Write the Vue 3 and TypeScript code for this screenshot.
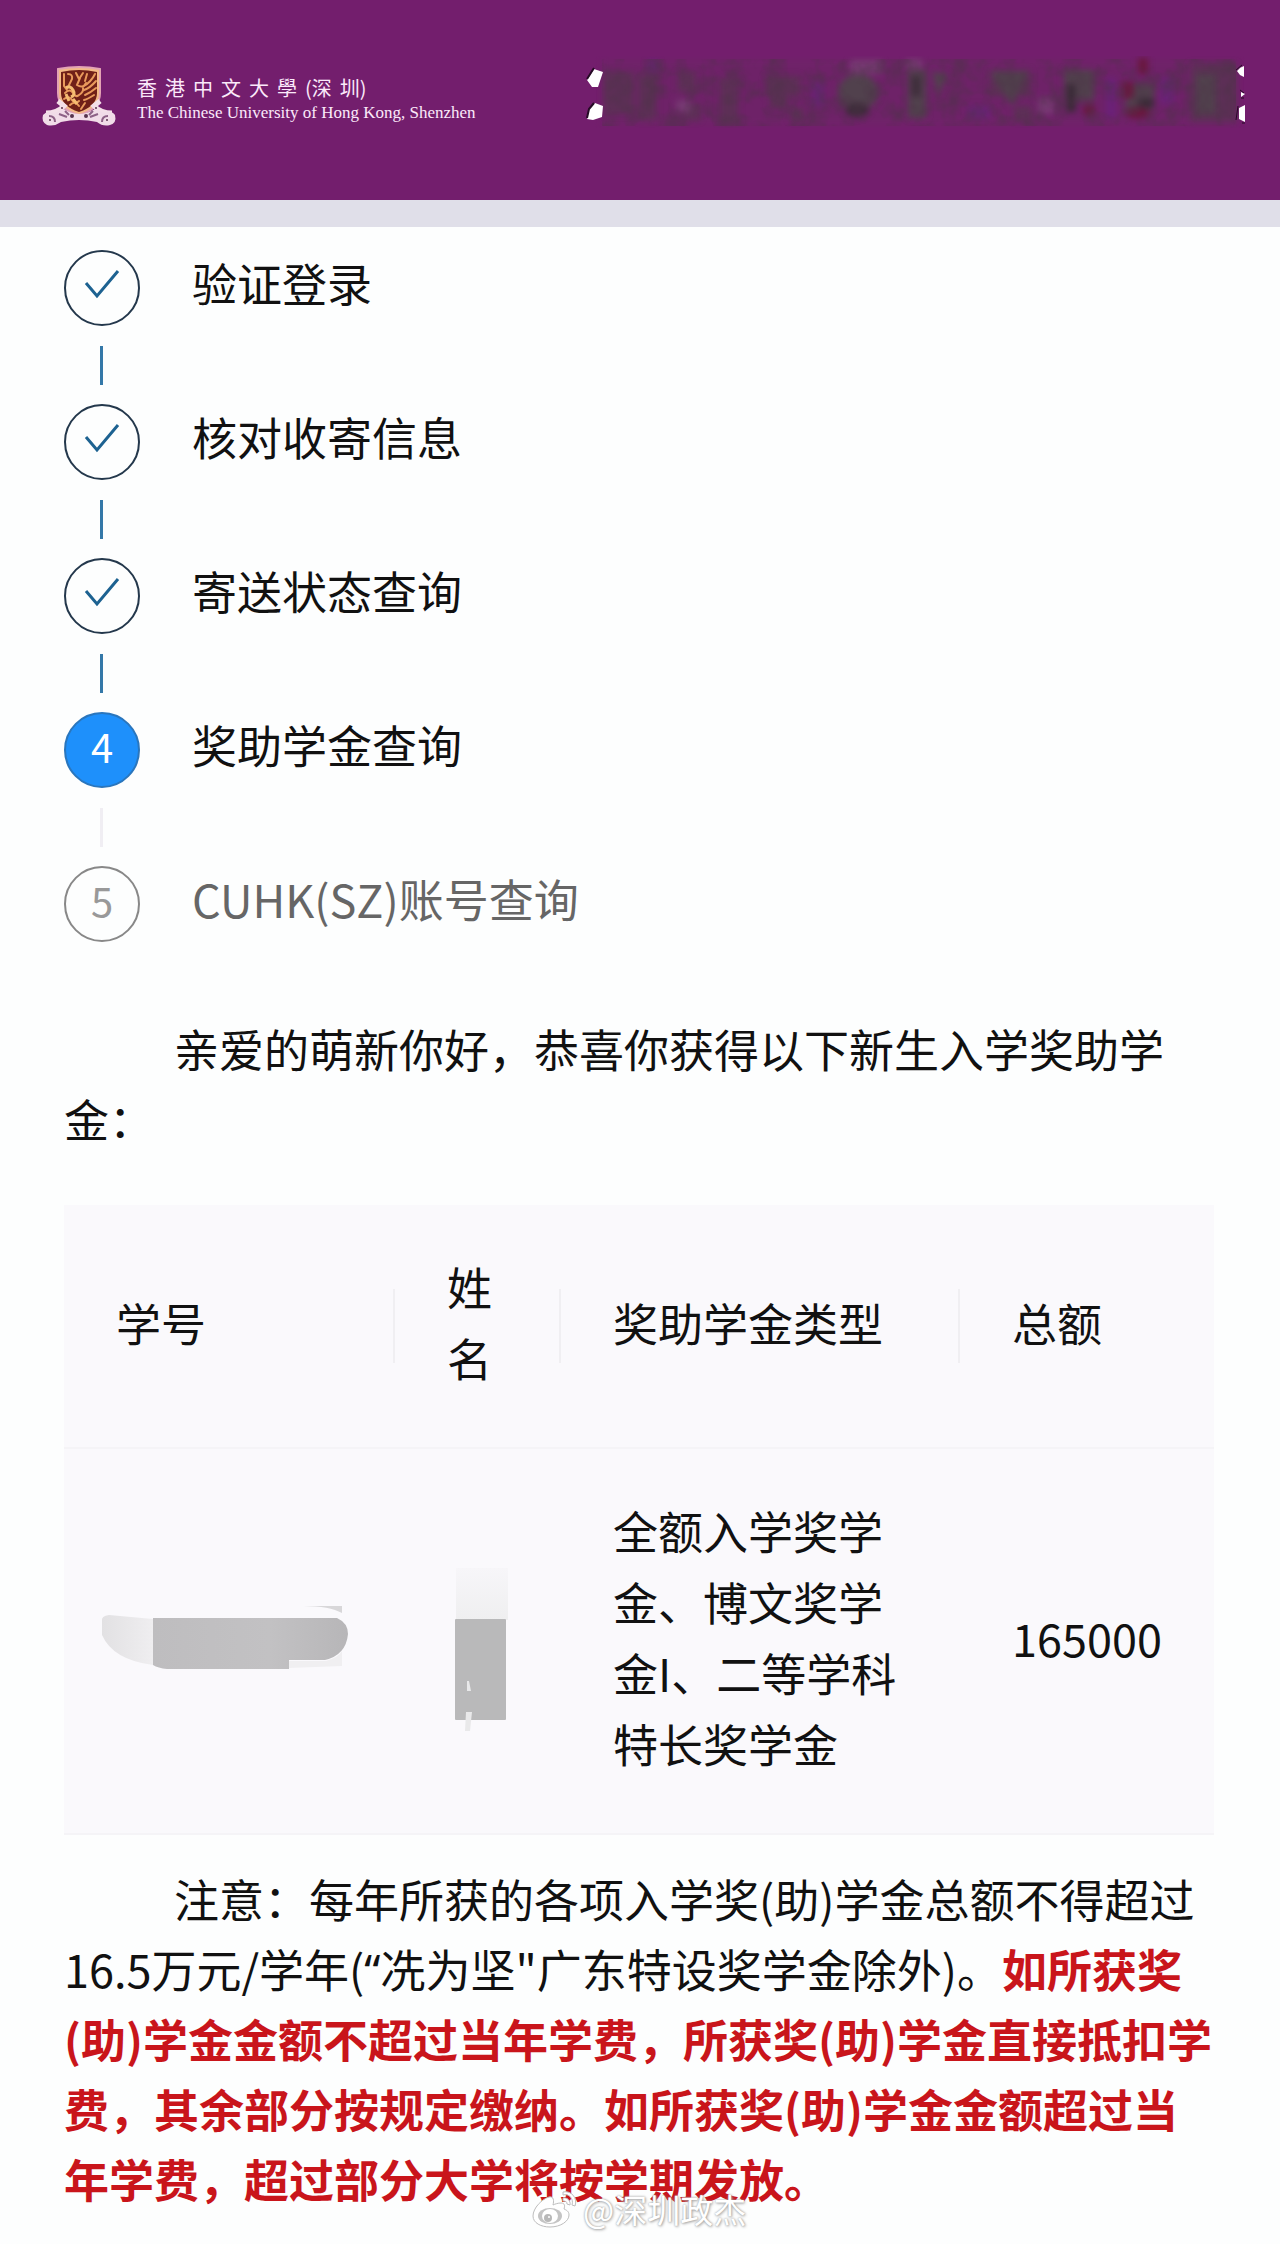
<script setup lang="ts">
interface Step {
  title: string
  state: 'done' | 'active' | 'waiting'
}

const steps: Step[] = [
  { title: '验证登录', state: 'done' },
  { title: '核对收寄信息', state: 'done' },
  { title: '寄送状态查询', state: 'done' },
  { title: '奖助学金查询', state: 'active' },
  { title: 'CUHK(SZ)账号查询', state: 'waiting' },
]

const schoolName: string[] = ['香', '港', '中', '文', '大', '學', '(深', '圳)']

const awardLines: string[] = ['全额入学奖学', '金、博文奖学', '金I、二等学科', '特长奖学金']
</script>

<template>
  <div class="page">
    <header class="banner">
      <a class="brand" href="#">
        <svg class="crest" viewBox="0 0 80 64" aria-hidden="true">
          <path d="M18 3 Q39 -1 60 3 V27 Q60 43 39 49 Q18 43 18 27 Z" fill="#f3b987" stroke="#e3a3b4" stroke-width="2" />
          <path d="M21 6 Q39 2 57 6 V27 Q57 40 39 46 Q21 40 21 27 Z" fill="#702018" />
          <g fill="none" stroke="#e99a5c" stroke-width="2" stroke-linecap="round">
            <path d="M24 8v12l3 4M28 8q5 0 4 5l-3 6M36 7l3 6 4-6M40 12l-3 7q6 4 9-2" />
            <path d="M55 8q-4 8-11 12M56 15q-6 7-12 9M56 22q-6 5-11 7M54 29q-6 4-10 5" />
            <path d="M25 27q5-5 8 0t6 2q5-3 4-7M24 33q5-4 8 1t7 1M30 39q5-5 9 1M47 8l-2 7M41 43l4-6" />
          </g>
          <path d="M26 22q4-3 7 2t-2 7M33 33l4 5M26 28l3 7" fill="none" stroke="#f5bd72" stroke-width="3" />
          <path d="M6 47 Q17 47 24 40 L18 35 M72 47 Q61 47 54 40 L60 35" fill="none" stroke="#f3dfe8" stroke-width="5" />
          <path d="M3 49 q4-5 11-2 l10-4 q15 10 31 0 l9 4 q8-3 11 2 q2 8-5 10 q-7 2-13-3 q-18-4-36 0 q-7 5-14 3 q-6-3-4-10z" fill="#f1dce8" />
          <path d="M9 50q6 0 6 6M68 50q-6 0-6 6M19 48l8 3M58 48l-8 3M25 45l4 4M53 45l-4 4" fill="none" stroke="#8d6186" stroke-width="2" />
          <g fill="#58344e">
            <circle cx="10" cy="54" r="1" /><circle cx="67" cy="54" r="1" />
            <circle cx="32" cy="50" r="2" /><circle cx="46" cy="50" r="2" />
            <circle cx="22" cy="42" r="1" /><circle cx="56" cy="42" r="1" />
          </g>
        </svg>
        <span class="brand-text">
          <span class="brand-zh"><span v-for="part in schoolName" :key="part">{{ part }}</span></span>
          <span class="brand-en">The Chinese University of Hong Kong, Shenzhen</span>
        </span>
      </a>
      <svg class="redacted" viewBox="0 0 660 72" aria-hidden="true">
        <defs>
          <filter id="soft" x="-20%" y="-20%" width="140%" height="140%" color-interpolation-filters="sRGB"><feGaussianBlur stdDeviation="3" /></filter>
          <filter id="mottle" x="0" y="0" width="100%" height="100%" color-interpolation-filters="sRGB">
            <feTurbulence type="fractalNoise" baseFrequency="0.05 0.05" numOctaves="3" seed="4" />
            <feColorMatrix values="0 0 0 0 0.3  0 0 0 0 0.2  0 0 0 0 0.28  2.4 0 0 0 -0.9" />
          </filter>
        </defs>
        <rect x="16" y="3" width="636" height="67" fill="#6e2468" opacity=".8" filter="url(#soft)" />
        <g filter="url(#soft)">
          <g fill="#573451" opacity=".75">
            <rect x="18" y="16" width="30" height="42" /><rect x="52" y="18" width="18" height="46" />
            <rect x="92" y="16" width="18" height="20" /><rect x="98" y="48" width="16" height="16" />
            <rect x="134" y="22" width="18" height="46" /><rect x="180" y="20" width="34" height="20" />
            <rect x="184" y="34" width="18" height="18" /><rect x="204" y="52" width="14" height="12" />
            <rect x="404" y="14" width="40" height="26" /><rect x="428" y="50" width="18" height="14" />
            <rect x="604" y="8" width="46" height="58" />
          </g>
          <g fill="#51414d">
            <ellipse cx="272" cy="36" rx="20" ry="18" /><rect x="322" y="14" width="18" height="48" />
            <path d="M346 16l16 2-10 22zM404 16h38l-16 34z" />
            <rect x="478" y="14" width="30" height="30" /><rect x="540" y="28" width="28" height="26" />
            <rect x="610" y="18" width="20" height="40" />
          </g>
          <g fill="#3b2b38">
            <ellipse cx="271" cy="54" rx="12" ry="7" /><rect x="480" y="28" width="10" height="28" />
            <rect x="552" y="42" width="16" height="10" /><rect x="326" y="20" width="8" height="20" />
          </g>
          <g fill="#69183f">
            <circle cx="503" cy="54" r="6" /><ellipse cx="552" cy="57" rx="12" ry="6" />
            <rect x="552" y="2" width="10" height="16" /><rect x="536" y="26" width="12" height="16" />
          </g>
          <g fill="#7b4378" opacity=".7">
            <rect x="264" y="4" width="32" height="14" /><rect x="320" y="3" width="16" height="10" />
            <rect x="452" y="42" width="16" height="16" /><rect x="90" y="44" width="14" height="12" />
          </g>
          <g fill="#6a2280" opacity=".7">
            <rect x="62" y="4" width="10" height="12" /><rect x="226" y="26" width="12" height="24" />
            <rect x="382" y="50" width="22" height="12" /><rect x="574" y="22" width="14" height="26" />
            <rect x="520" y="22" width="10" height="40" />
          </g>
        </g>
        <rect x="16" y="3" width="634" height="67" opacity=".5" filter="url(#mottle)" />
        <path d="M1 24 8 13 17 16 12 31 6 31z M1 63 3 53 9 47 17 50 16 61 7 64z" fill="#fff" />
        <path d="M1 23 8 12M1 62 3 53 8 47" fill="none" stroke="#250b25" stroke-width="2" />
        <path d="M651 15q3-4 7-5v11l-4-2zM655 36l4 2-4 3zM653 52l6-3v17l-6-3z" fill="#fff" />
        <path d="M650 14l6-5M654 34l4 3M652 50l-2 14M655 42h3M656 67h3" fill="none" stroke="#250b25" />
      </svg>
    </header>

    <main class="content">
      <ol class="steps">
        <li v-for="(step, i) in steps" :key="step.title" class="step" :class="step.state">
          <span class="marker">
            <svg v-if="step.state === 'done'" class="check" viewBox="0 0 36 30" role="img" aria-label="已完成">
              <path d="M2 14 13 27 34 2" fill="none" stroke="#1d6291" stroke-width="3" />
            </svg>
            <template v-else>{{ i + 1 }}</template>
          </span>
          <span class="title">{{ step.title }}</span>
        </li>
      </ol>

      <p class="intro">亲爱的萌新你好，恭喜你获得以下新生入学奖助学<br />金：</p>

      <table class="awards">
        <colgroup>
          <col class="col-id" />
          <col class="col-name" />
          <col class="col-type" />
          <col />
        </colgroup>
        <thead>
          <tr>
            <th scope="col">学号</th>
            <th scope="col">姓名</th>
            <th scope="col">奖助学金类型</th>
            <th scope="col">总额</th>
          </tr>
        </thead>
        <tbody>
          <tr>
            <td class="masked">
              <svg class="mask-id" viewBox="0 0 250 72" role="img" aria-label="已隐藏">
                <defs>
                  <linearGradient id="fade" x1="0" x2="1" y1="0" y2="0">
                    <stop offset="0" stop-color="#e2e1e3" /><stop offset="1" stop-color="#efeef0" />
                  </linearGradient>
                  <linearGradient id="bar" x1="0" x2="1" y1="0" y2="0">
                    <stop offset="0" stop-color="#bebdbf" /><stop offset=".6" stop-color="#c2c1c3" /><stop offset="1" stop-color="#b7b6b8" />
                  </linearGradient>
                </defs>
                <path d="M1 16Q0 11 8 10L52 14V60Q12 55 1 30z" fill="url(#fade)" />
                <path d="M52 13H236Q247 18 247 29Q245 50 224 55H188V64H66Q57 63 52 60z" fill="url(#bar)" />
                <path d="M196 1 241 1V8Q227 0 196 1z" fill="#d8d7d9" />
                <path d="M188 56H225Q238 52 241 46V61L188 63z" fill="#f0eff1" />
              </svg>
            </td>
            <td class="masked">
              <svg class="mask-name" viewBox="0 0 60 180" role="img" aria-label="已隐藏">
                <defs>
                  <linearGradient id="haze" x1="0" x2="0" y1="0" y2="1">
                    <stop offset="0" stop-color="#f7f6f9" /><stop offset="1" stop-color="#efeff0" />
                  </linearGradient>
                </defs>
                <rect x="1" y="17" width="52" height="52" fill="url(#haze)" />
                <rect y="68" width="51" height="101" rx="1" fill="#b9b9ba" />
                <path d="M12 130h2l2 10h-4zM11 161h6l-2 19h-5z" fill="#e9e9ea" />
              </svg>
            </td>
            <td><template v-for="(line, i) in awardLines" :key="line"><br v-if="i" />{{ line }}</template></td>
            <td>165000</td>
          </tr>
        </tbody>
      </table>

      <p class="note">
        注意：每年所获的各项入学奖(助)学金总额不得超过<br />
        16.5万元/学年(<span class="quote">“</span>冼为坚"广东特设奖学金除外)。<strong>如所获奖<br />
        (助)学金金额不超过当年学费，所获奖(助)学金直接抵扣学<br />
        费，其余部分按规定缴纳。如所获奖(助)学金金额超过当<br />
        年学费，超过部分大学将按学期发放。</strong>
      </p>
    </main>

    <div class="watermark">
      <svg class="weibo" viewBox="0 0 46 38" aria-hidden="true">
        <g fill="#fff" stroke="#bdbdbd" stroke-width="1">
          <path d="M17 7C10 9 1 18 1 26c0 7 8 11 17 11 11 0 19-6 19-12 0-4-3-5-5-6 1-3 1-6-3-6-3 0-6 1-8 2 1-4 1-9-4-8z" />
          <path d="M31 2c8-2 15 6 12 14l-3-1c2-6-3-12-9-10zM31 8c4-1 8 3 7 7l-3-1c0-2-1-3-4-3z" />
        </g>
        <ellipse cx="18" cy="26" rx="12" ry="8" fill="#c4c4c4" />
        <ellipse cx="18" cy="26" rx="8" ry="7" fill="#fff" />
        <circle cx="16" cy="28" r="4" fill="#b8b8b8" />
        <circle cx="17" cy="27" r="1" fill="#fff" />
      </svg>
      <span>@深圳政杰</span>
    </div>
  </div>
</template>

<style>
body {
  margin: 0;
  background: #fdfefe;
}
</style>

<style scoped>
.page {
  position: relative;
  padding-bottom: 25px;
  background: #fdfefe;
  color: #111;
  font-family: "Noto Sans CJK SC", sans-serif;
  font-size: 45px;
  line-height: 70px;
}

.banner {
  display: flex;
  align-items: flex-start;
  justify-content: space-between;
  box-sizing: border-box;
  height: 227px;
  padding: 56px 34px 0 40px;
  border-bottom: 27px solid #e0dfe9;
  background: #731e6d;
}

.brand {
  display: flex;
  gap: 17px;
  padding-top: 10px;
  color: #fbe9fa;
  text-decoration: none;
}

.crest {
  width: 80px;
  height: 64px;
}

.brand-text {
  display: flex;
  flex-direction: column;
  padding-top: 10px;
  white-space: nowrap;
}

.brand-zh {
  display: flex;
  gap: 8px;
  font-size: 20px;
  line-height: 24px;
}

.brand-en {
  font-family: "Liberation Serif", serif;
  font-size: 17px;
  line-height: 26px;
}

.redacted {
  width: 660px;
  height: 72px;
}

.content {
  padding: 23px 66px 0 64px;
}

.steps {
  display: flex;
  flex-direction: column;
  gap: 78px;
  margin: 0;
  padding: 0;
  list-style: none;
}

.step {
  position: relative;
  display: flex;
  gap: 52px;
}

.step:not(:last-child)::after {
  content: "";
  position: absolute;
  top: 96px;
  left: 36px;
  width: 3px;
  height: 39px;
  background: #3478a8;
}

.step.active::after {
  background: #f0eef3;
}

.marker {
  display: flex;
  align-items: center;
  justify-content: center;
  box-sizing: border-box;
  width: 76px;
  height: 76px;
  padding-bottom: 8px;
  border: 2px solid #24384c;
  border-radius: 50%;
  font-size: 40px;
}

.check {
  width: 36px;
  height: 30px;
}

.title {
  line-height: 66px;
}

.active .marker {
  border-color: #2a76bd;
  background: #1e90fb;
  color: #fff;
}

.waiting .marker {
  border-color: #888;
  color: #999;
}

.waiting .title {
  color: #666;
}

.intro {
  margin: 72px 0 51px;
  text-indent: 110px;
}

.awards {
  width: 100%;
  border-collapse: collapse;
  table-layout: fixed;
  background: #faf9fc;
  line-height: 71px;
}

.col-id {
  width: 331px;
}

.col-name {
  width: 166px;
}

.col-type {
  width: 399px;
}

.awards th,
.awards td {
  padding: 46px 0 54px 52px;
  border-bottom: 2px solid #f5f4f7;
  text-align: left;
  vertical-align: middle;
  white-space: nowrap;
}

.awards th {
  position: relative;
  padding-right: 52px;
  font-weight: 400;
  white-space: normal;
}

.awards th:not(:last-child)::after {
  content: "";
  position: absolute;
  top: 50%;
  right: 0;
  width: 2px;
  height: 74px;
  margin-top: -37px;
  background: #f0eff2;
}

.awards .masked {
  padding: 0 0 0 37px;
}

.awards .masked + .masked {
  padding-left: 60px;
}

.mask-id,
.mask-name {
  display: block;
}

.mask-id {
  width: 250px;
  height: 72px;
}

.mask-name {
  width: 60px;
  height: 180px;
}

.note {
  margin: 29px 0 0;
  text-indent: 110px;
  white-space: nowrap;
}

.note strong {
  color: #c9151b;
  font-weight: 700;
}

.quote {
  font-family: "Noto Sans", sans-serif;
  line-height: 1;
}

.watermark {
  position: absolute;
  bottom: 10px;
  left: 532px;
  display: flex;
  align-items: center;
  gap: 5px;
  color: #fff;
  font-size: 33px;
  line-height: 40px;
  text-shadow: 0 0 2px #999, 1px 1px 3px #aaa;
}

.weibo {
  width: 46px;
  height: 38px;
}
</style>
